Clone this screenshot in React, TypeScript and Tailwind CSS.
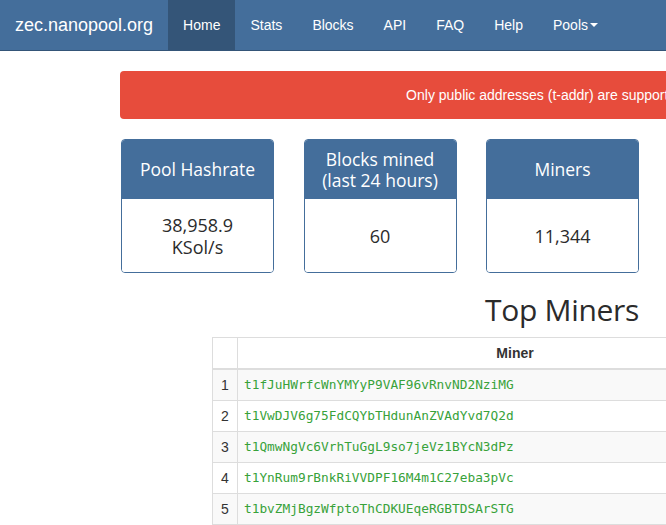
import React from "react";

const arial = { fontFamily: '"Liberation Sans", Arial, sans-serif' };

const navItems = ["Home", "Stats", "Blocks", "API", "FAQ", "Help"];

const miners = [
  "t1fJuHWrfcWnYMYyP9VAF96vRnvND2NziMG",
  "t1VwDJV6g75FdCQYbTHdunAnZVAdYvd7Q2d",
  "t1QmwNgVc6VrhTuGgL9so7jeVz1BYcN3dPz",
  "t1YnRum9rBnkRiVVDPF16M4m1C27eba3pVc",
  "t1bvZMjBgzWfptoThCDKUEqeRGBTDSArSTG",
];

function StatCard({ title, children }: { title: React.ReactNode; children: React.ReactNode }) {
  return (
    <div className="w-[153px] shrink-0 rounded-[4px] border border-[#446e9b] overflow-hidden">
      <div className="h-[59px] bg-[#446e9b] flex items-center justify-center text-center text-white text-[17.5px] leading-[21px]">
        {title}
      </div>
      <div className="h-[73px] bg-white flex flex-col items-center justify-center text-center text-[#2b2b2b] text-[18px] leading-[22px]">
        {children}
      </div>
    </div>
  );
}

export default function App() {
  return (
    <div className="w-full min-h-[525px] overflow-hidden bg-white" style={{ fontFamily: '"Open Sans", sans-serif' }}>
      <div className="w-[1200px]">
        <nav className="h-[51px] bg-[#446e9b] border-b border-[#345578] flex text-white" style={arial}>
          <div className="px-[15px] h-[50px] flex items-center text-[18px] leading-[20px]">zec.nanopool.org</div>
          <ul className="flex h-[50px]">
            {navItems.map((n, i) => (
              <li
                key={n}
                className={
                  "px-[15px] h-[50px] flex items-center text-[14px] leading-[20px] " +
                  (i === 0 ? "bg-[#345578]" : "")
                }
              >
                {n}
              </li>
            ))}
            <li className="px-[15px] h-[50px] flex items-center text-[14px] leading-[20px]">
              Pools
              <span className="ml-[2px] inline-block w-0 h-0 border-l-[4px] border-r-[4px] border-t-[4px] border-l-transparent border-r-transparent border-t-white" />
            </li>
          </ul>
        </nav>

        <div className="pl-[120px] pt-[20px]">
          <div
            className="w-[850px] h-[48px] rounded-[4px] bg-[#e74c3c] text-white text-[14px] flex items-center justify-center"
            style={arial}
          >
            Only public addresses (t-addr) are supported
          </div>

          <div className="flex gap-[29.5px] mt-[20px] pl-[1px]">
            <StatCard title="Pool Hashrate">
              <div>38,958.9</div>
              <div>KSol/s</div>
            </StatCard>
            <StatCard
              title={
                <div>
                  <div>Blocks mined</div>
                  <div>(last 24 hours)</div>
                </div>
              }
            >
              <div>60</div>
            </StatCard>
            <StatCard title="Miners">
              <div>11,344</div>
            </StatCard>
          </div>
        </div>

        <div className="ml-[212px] mt-[19px] w-[700px]">
          <h2 className="text-center text-[30px] leading-[35px] tracking-[-0.3px] text-[#2b2b2b] mb-[10px] whitespace-nowrap">
            Top Miners
          </h2>
          <table className="w-[800px] table-fixed border-collapse text-[14px] text-[#333]" style={arial}>
            <thead>
              <tr>
                <th className="w-[25px] border border-[#ddd] border-b-2 px-[5px] py-[5px] leading-[20px]"></th>
                <th className="w-[555px] border border-[#ddd] border-b-2 px-[5px] py-[5px] leading-[20px] font-bold text-center text-[#333]">
                  Miner
                </th>
                <th className="border border-[#ddd] border-b-2 px-[5px] py-[5px] leading-[20px] font-bold text-center">
                  Hashrate
                </th>
              </tr>
            </thead>
            <tbody>
              {miners.map((m, i) => (
                <tr key={m} className={i % 2 === 0 ? "bg-[#f9f9f9]" : "bg-white"}>
                  <td className="h-[31px] border border-[#ddd] px-0 py-0 leading-[20px] text-center text-[#333]">{i + 1}</td>
                  <td
                    className="h-[31px] border border-[#ddd] pl-[6px] pr-[5px] py-0 leading-[20px] text-[#38a23a] text-[12.8px]"
                    style={{ fontFamily: '"DejaVu Sans Mono", monospace' }}
                  >
                    {m}
                  </td>
                  <td className="h-[31px] border border-[#ddd] px-[5px] py-0 leading-[20px]"></td>
                </tr>
              ))}
            </tbody>
          </table>
        </div>
      </div>
    </div>
  );
}
